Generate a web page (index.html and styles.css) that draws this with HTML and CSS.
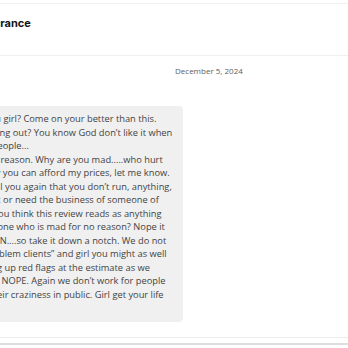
FILE: index.html
```html
<!DOCTYPE html>
<html lang="en">
<head>
<meta charset="utf-8">
<link rel="stylesheet" href="styles.css">
</head>
<body>
<div class="page">
  <header class="header">
    <h2 class="title">Auto Insurance</h2>
  </header>
  <section class="review">
    <div class="meta">
      <span class="date">December 5, 2024</span>
    </div>
    <div class="reply">
      <p class="reply-text">Why do you girl? Come on your better than this.<br>You’re lashing out? You know God don’t like it when<br>you bash people...<br>mad for no reason. Why are you mad.....who hurt<br>you? Honey you can afford my prices, let me know.<br>Girl I will tell you again that you don’t run, anything,<br>I don’t want or need the business of someone of<br>a person. You think this review reads as anything<br>from someone who is mad for no reason? Nope it<br>It’s not. EVEN....so take it down a notch. We do not<br>accept “problem clients” and girl you might as well<br>be throwing up red flags at the estimate as we<br>always said NOPE. Again we don’t work for people<br>to share their craziness in public. Girl get your life</p>
    </div>
  </section>
  <div class="next"></div>
</div>
</body>
</html>
```
FILE: styles.css
```css
html, body {
  margin: 0;
  padding: 0;
  background: #ffffff;
  overflow: hidden;
}

body {
  padding-top: 3px;
  font-family: "Open Sans", "Liberation Sans", sans-serif;
}

.page {
  margin-left: -60px;
}

.header {
  border-top: 1px solid #f1f1f1;
  border-bottom: 1px solid #f0f0f0;
  padding: 10px 0 23px 9px;
}

.title {
  margin: 0;
  font-family: "Inter", "Liberation Sans", sans-serif;
  font-weight: 700;
  font-size: 11px;
  line-height: 18px;
  color: #151515;
  white-space: nowrap;
}

.review {
  border-bottom: 1px solid #ededed;
  padding-bottom: 15px;
}

.meta {
  padding: 6px 0 0 235px;
  line-height: 12px;
}

.date {
  font-size: 8px;
  color: #5e5e5e;
}

.reply {
  margin-top: 29px;
  width: 243px;
  background: #f0f0f0;
  border-radius: 4px;
  padding: 6px 0 21px 10px;
  box-sizing: border-box;
}

.reply-text {
  margin: 0;
  font-size: 9.3px;
  line-height: 13.5px;
  color: #434343;
  white-space: nowrap;
}

.next {
  margin-top: 5px;
  border-top: 2px solid #dedede;
}
```
